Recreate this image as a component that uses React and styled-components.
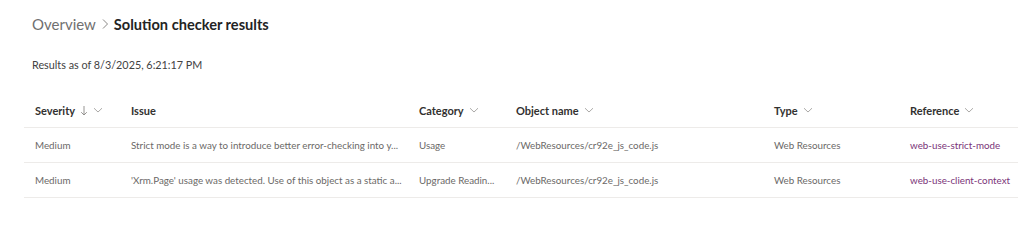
import React from "react";
import styled, { createGlobalStyle } from "styled-components";

const Global = createGlobalStyle`
  html, body { margin: 0; padding: 0; background: #ffffff; }
  body { font-family: "Lato", "Open Sans", sans-serif; color: #323130; }
`;

const Page = styled.div`
  width: 1024px;
  height: 245px;
  box-sizing: border-box;
  padding: 12px 6px 0 24px;
`;

const Breadcrumb = styled.nav`
  display: flex;
  align-items: center;
  gap: 5px;
  padding-left: 8px;
  height: 24px;
  font-size: 15px;
`;

const Crumb = styled.span`
  color: ${(p) => (p.$current ? "#242424" : "#707070")};
  font-weight: ${(p) => (p.$current ? 700 : 400)};
  font-size: ${(p) => (p.$current ? "14.6px" : "15px")};
`;

const Meta = styled.div`
  margin-top: 22px;
  padding-left: 8px;
  font-size: 10.8px;
  color: #424242;
`;

const Table = styled.div`
  margin-top: 22px;
  display: grid;
  grid-template-columns: 96px 288px 97px 258px 136px 1fr;
`;

const HeadCell = styled.div`
  height: 34px;
  display: flex;
  align-items: center;
  gap: 5px;
  padding-left: 11px;
  font-size: 11px;
  font-weight: 700;
  color: #323130;
  border-bottom: 1px solid #edebe9;
`;

const Cell = styled.div`
  height: 34px;
  display: flex;
  align-items: center;
  padding-left: 11px;
  font-size: 9.8px;
  color: ${(p) => (p.$link ? "#7a3478" : "#6b6967")};
  border-bottom: 1px solid #edebe9;
  white-space: nowrap;
  overflow: hidden;
`;

const Chevron = ({ size = 10 }) => (
  <svg width={size} height={size} viewBox="0 0 10 10" fill="none">
    <path d="M1 3.2 L5 7 L9 3.2" stroke="#a19f9d" strokeWidth="0.9" />
  </svg>
);

const SepChevron = () => (
  <svg width="8" height="12" viewBox="0 0 8 12" fill="none">
    <path d="M2 1.5 L6.5 6 L2 10.5" stroke="#8a8886" strokeWidth="1" />
  </svg>
);

const Arrow = () => (
  <svg width="8" height="11" viewBox="0 0 8 11" fill="none">
    <path d="M4 1 V10 M1.2 7.2 L4 10 L6.8 7.2" stroke="#8a8886" strokeWidth="0.9" />
  </svg>
);

const headers = [
  { label: "Severity", sort: true },
  { label: "Issue", none: true },
  { label: "Category" },
  { label: "Object name" },
  { label: "Type" },
  { label: "Reference" },
];

const rows = [
  [
    "Medium",
    "Strict mode is a way to introduce better error-checking into y...",
    "Usage",
    "/WebResources/cr92e_js_code.js",
    "Web Resources",
    "web-use-strict-mode",
  ],
  [
    "Medium",
    "'Xrm.Page' usage was detected. Use of this object as a static a...",
    "Upgrade Readin...",
    "/WebResources/cr92e_js_code.js",
    "Web Resources",
    "web-use-client-context",
  ],
];

export default function App() {
  return (
    <Page>
      <Global />
      <Breadcrumb>
        <Crumb>Overview</Crumb>
        <SepChevron />
        <Crumb $current>Solution checker results</Crumb>
      </Breadcrumb>
      <Meta>Results as of 8/3/2025, 6:21:17 PM</Meta>
      <Table>
        {headers.map((h) => (
          <HeadCell key={h.label}>
            {h.label}
            {h.sort && <Arrow />}
            {!h.none && <Chevron />}
          </HeadCell>
        ))}
        {rows.map((r, i) =>
          r.map((c, j) => (
            <Cell key={`${i}-${j}`} $link={j === 5}>
              {c}
            </Cell>
          ))
        )}
      </Table>
    </Page>
  );
}
